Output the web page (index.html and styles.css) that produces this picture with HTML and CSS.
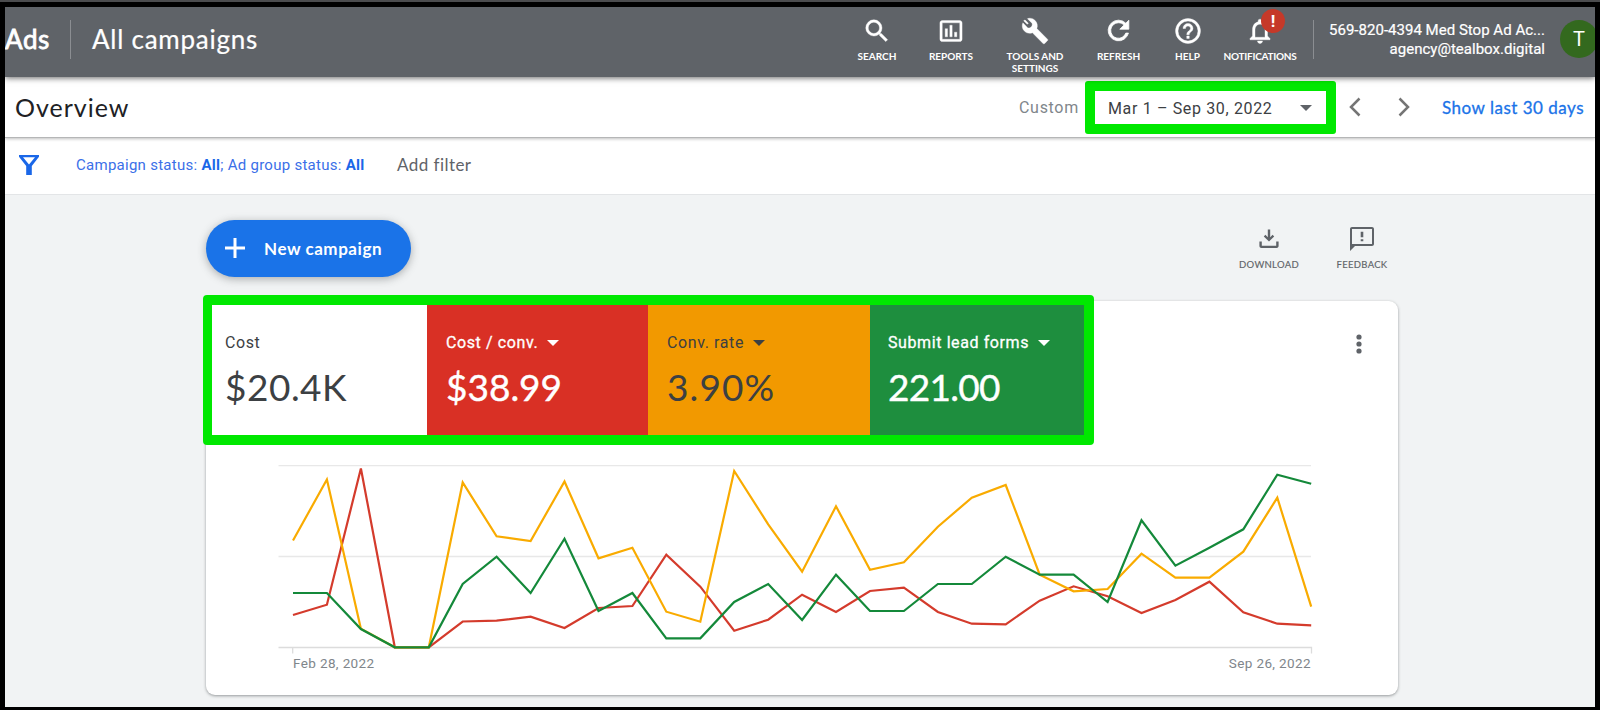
FILE: index.html
```html
<!DOCTYPE html>
<html lang="en">
<head>
<meta charset="utf-8">
<title>All campaigns – Overview</title>
<link rel="stylesheet" href="styles.css">
</head>
<body>
<div class="window">
  <header class="topbar">
    <span class="brand">Ads</span>
    <span class="rule"></span>
    <span class="scope">All campaigns</span>
    <nav class="tools">
      <a class="tool tool-search"><svg viewBox="0 0 24 24"><path d="M15.5 14h-.79l-.28-.27A6.47 6.47 0 0 0 16 9.500 6.500 6.500 0 1 0 9.500 16c1.610 0 3.090-.59 4.230-1.570l.27.28v.79l5 4.990L20.490 19l-4.990-5zm-6 0a4.500 4.500 0 1 1 0-9 4.500 4.500 0 0 1 0 9z"/></svg><span>SEARCH</span></a>
      <a class="tool tool-reports"><svg viewBox="0 0 24 24"><path d="M9 17H7v-7h2v7zm4 0h-2V7h2v10zm4 0h-2v-4h2v4zm2.500 2.100h-15V5h15v14.100zm0-16.100h-15c-1.100 0-2 .9-2 2v14c0 1.100.9 2 2 2h15c1.100 0 2-.9 2-2V5c0-1.100-.9-2-2-2z"/></svg><span>REPORTS</span></a>
      <a class="tool tool-settings"><svg viewBox="0 0 24 24"><path d="M22.700 19l-9.100-9.100c.9-2.300.4-5-1.500-6.900-2-2-4.400-2.300-6.600-1.600L9.400 5.300C10.400 7.600 8 10 5.700 9.200L1.600 5C.6 7.300.9 10.100 2.900 12.100c1.900 1.900 4.600 2.400 6.900 1.500l9.100 9.100c.4.4 1 .4 1.400 0l2.300-2.300c.5-.4.5-1.100.1-1.400z"/><path d="M2.200 3.200 5.400 6.300 6.300 5.400 3.400 2.400"/></svg><span>TOOLS AND<br>SETTINGS</span></a>
      <a class="tool tool-refresh"><svg viewBox="0 0 24 24"><path d="M17.650 6.350A7.960 7.960 0 0 0 12 4a8 8 0 1 0 7.730 10h-2.080A6 6 0 1 1 12 6c1.660 0 3.140.69 4.220 1.780L13 11h7V4l-2.350 2.350z"/></svg><span>REFRESH</span></a>
      <a class="tool tool-help"><svg viewBox="0 0 24 24"><path d="M11 18h2v-2h-2v2zm1-16a10 10 0 1 0 0 20 10 10 0 0 0 0-20zm0 18a8 8 0 1 1 0-16 8 8 0 0 1 0 16zm0-14a4 4 0 0 0-4 4h2a2 2 0 1 1 4 0c0 2-3 1.750-3 5h2c0-2.250 3-2.500 3-5a4 4 0 0 0-4-4z"/></svg><span>HELP</span></a>
      <a class="tool tool-bell"><svg viewBox="0 0 24 24"><path d="M12 22c1.100 0 2-.9 2-2h-4c0 1.100.9 2 2 2zm6-6v-5c0-3.070-1.640-5.640-4.500-6.320V4a1.500 1.500 0 0 0-3 0v.68C7.630 5.360 6 7.920 6 11v5l-2 2v1h16v-1l-2-2zm-2 1H8v-6c0-2.480 1.510-4.500 4-4.500s4 2.020 4 4.500v6z"/></svg><i class="badge">!</i><span>NOTIFICATIONS</span></a>
    </nav>
    <span class="rule rule-end"></span>
    <div class="account"><div class="account-id">569-820-4394 Med Stop Ad Ac...</div><div class="account-mail">agency@tealbox.digital</div></div>
    <span class="avatar">T</span>
  </header>

  <section class="titlebar">
    <h1>Overview</h1>
    <span class="custom">Custom</span>
    <div class="daterange"><span>Mar 1 – Sep 30, 2022</span><i class="caret"></i></div>
    <svg class="chev prev" viewBox="0 0 12 20"><path d="M10.500 1.500 2 10l8.500 8.500"/></svg>
    <svg class="chev next" viewBox="0 0 12 20"><path d="M1.500 1.500 10 10l-8.500 8.500"/></svg>
    <a class="last30">Show last 30 days</a>
  </section>

  <section class="filterbar">
    <svg class="funnel" viewBox="0 0 20 20"><path d="M0 0h20v1.800L12.800 11v9H7.200v-9L0 1.800zM4 2.200l6 7.300 6-7.300z" fill-rule="evenodd"/></svg>
    <span class="status">Campaign status: <b>All</b>; Ad group status: <b>All</b></span>
    <span class="addfilter">Add filter</span>
  </section>

  <main class="main">
    <div class="actions">
      <a class="newcampaign"><svg viewBox="0 0 20 20"><path d="M10 0v20M0 10h20"/></svg><span>New campaign</span></a>
      <a class="action action-download"><svg viewBox="0 0 24 24"><path d="M17.200 9.400 15.600 7.800 13.200 10.200V2.500h-2.400v7.700L8.400 7.800 6.800 9.400l5.200 5.200zM19.200 14.500v4.200H4.800v-4.200H2.400V19c0 1.100.9 2 2 2h15.200c1.100 0 2-.9 2-2v-4.500z"/></svg><span>DOWNLOAD</span></a>
      <a class="action action-feedback"><svg viewBox="0 0 24 24"><path d="M22 0H2C.9 0 0 .9 0 2v22l5-5h17c1.100 0 2-.9 2-2V2c0-1.100-.9-2-2-2zm0 17H2V2h20v15zM10.700 12.200h2.600v2h-2.600zm0-7.500h2.600v5.500h-2.600z"/></svg><span>FEEDBACK</span></a>
    </div>

    <article class="card">
      <div class="scores">
        <div class="score"><div class="label l-cost">Cost</div><div class="value v-cost">$20.4K</div></div>
        <div class="score red"><div class="label">Cost / conv.<i class="caret"></i></div><div class="value v-conv">$38.99</div></div>
        <div class="score orange"><div class="label">Conv. rate<i class="caret"></i></div><div class="value v-rate">3.90%</div></div>
        <div class="score green"><div class="label">Submit lead forms<i class="caret"></i></div><div class="value v-leads">221.00</div></div>
        <div class="highlight"></div>
      </div>
      <svg class="kebab" viewBox="0 0 6 20"><circle cx="3" cy="3" r="2.600"/><circle cx="3" cy="10" r="2.600"/><circle cx="3" cy="17" r="2.600"/></svg>
      <div class="chart">
        <svg class="plot" viewBox="278 460 1036 194">
          <path class="grid" d="M278.500 465.700H1311M278.500 556.500H1311"/>
          <path class="axis" d="M278.500 647.500H1311.500V653.500M292.700 647.500V653.500"/>
          <polyline class="line s-red" points=""/>
          <polyline class="line s-yellow" points=""/>
          <polyline class="line s-green" points=""/>
        </svg>
        <div class="dates"><span>Feb 28, 2022</span><span>Sep 26, 2022</span></div>
      </div>
    </article>
  </main>
</div>
<script src="chart.js"></script>
</body>
</html>
```
FILE: chart.js
```js
const series = {
  's-red': [615,604.7,468.5,647.3,647.3,621.5,620.7,616.7,628,608,606,554.7,586.7,630.7,619.7,594.7,612,591,587.7,612,623.7,624.3,600.7,586.3,596.3,613,600,581.7,612.3,623.7,625.3],
  's-yellow': [540.5,479.5,628.7,647.3,647.3,482.5,536.3,541,481.5,558.3,547.7,611.7,621.7,471,524.3,571.7,506.3,569.7,562.3,526.7,497.7,485,574.7,591.3,589,553.7,577.7,577.7,551.7,497.7,606.7],
  's-green': [593,593,629,647.3,647.3,584,556.7,593,538.7,611,593,638.3,638.3,602,584,620,574.7,611,611,584,584,556.7,574.7,574.7,602,520.3,565.7,547.7,529.3,474.7,483.7]
};
const firstX = 293, step = 33.94;
for (const [name, ys] of Object.entries(series)) {
  document.querySelector('.' + name).setAttribute('points',
    ys.map((y, i) => (firstX + i * step).toFixed(1) + ',' + y).join(' '));
}
```
FILE: styles.css
```css
* { box-sizing: border-box; }
body { margin: 0; background: #000; font-family: Roboto, "Liberation Sans", sans-serif; color: #3c4043; }
svg { display: block; flex: none; }
i { font-style: normal; }
.window { width: 1600px; height: 710px; border: 5px solid #000; border-bottom-width: 3px; border-top-width: 7px; background: #f1f3f4; overflow: hidden; display: flex; flex-direction: column; }
.window::before { content: ""; position: absolute; left: 0; top: 0; width: 1600px; height: 2px; background: #4b4c4e; }

.topbar { position: relative; z-index: 2; flex: none; height: 70px; background: #5f6368; color: #fff; display: flex; box-shadow: 0 1px 6px rgba(0,0,0,.6); }
.topbar > * { flex: none; }
.brand { width: 65px; font: 400 26px/64px Lato, sans-serif; letter-spacing: .6px; -webkit-text-stroke: .8px #fff; }
.rule { width: 1px; height: 39px; margin-top: 13px; background: #8b8e92; }
.scope { margin-left: 21px; width: 745px; font: 400 26px/64px Lato, sans-serif; letter-spacing: .75px; -webkit-text-stroke: .2px #fff; }
.tools { display: flex; margin-left: 3px; }
.tool { position: relative; flex: none; display: flex; flex-direction: column; align-items: center; padding-top: 9px; font: 700 10px/12px Lato, sans-serif; text-align: center; }
.tool svg { width: 30px; height: 30px; fill: #fff; stroke: #fff; stroke-width: .3; margin-bottom: 4px; }
.tool-search, .tool-reports { width: 74px; }
.tool-reports svg { width: 28px; height: 28px; margin: 1px 0 5px; }
.tool-settings { width: 94px; }
.tool-settings svg { width: 28px; height: 28px; margin: 1px 0 5px; }
.tool-refresh { width: 73px; }
.tool-refresh svg { width: 31px; height: 31px; margin: -1px 0 4px; stroke-width: .6; }
.tool-help { width: 65px; }
.tool-bell { width: 80px; letter-spacing: -.25px; }
.badge { position: absolute; left: 41px; top: 2px; width: 24px; height: 24px; border-radius: 12px; background: #c53929; font: 700 17px/24px Roboto, sans-serif; }
.rule-end { margin-left: 13px; }
.account { width: 231px; text-align: right; font-size: 15px; line-height: 19px; padding-top: 14px; white-space: nowrap; -webkit-text-stroke: .2px #fff; letter-spacing: .02px; }
.avatar { margin: 13px 0 0 15px; width: 38px; height: 38px; border-radius: 19px; background: #33691e; text-align: center; font-size: 20px; line-height: 39px; }

.titlebar { position: relative; z-index: 1; flex: none; height: 61px; background: #fff; border-bottom: 1px solid #b5b6b7; box-shadow: 0 1px 3px rgba(0,0,0,.25); display: flex; }
h1 { margin: 0; width: 1014px; padding-left: 10px; font: 400 25px/60px Lato, sans-serif; letter-spacing: 1px; color: #202124; }
.custom { width: 66px; font-size: 16px; line-height: 62px; letter-spacing: .7px; color: #80868b; }
.daterange { width: 251px; height: 53px; margin-top: 4px; border: 10px solid #00e800; border-radius: 3px; display: flex; align-items: center; justify-content: space-between; padding: 1px 14px 0 13px; font-size: 16px; letter-spacing: .65px; color: #3c4043; white-space: nowrap; }
.daterange .caret { color: #5f6368; }
.caret { display: inline-block; border: 6px solid transparent; border-top-color: currentColor; border-bottom: 0; }
.chev { width: 12px; height: 20px; margin-top: 20px; fill: none; stroke: #757575; stroke-width: 2.500; }
.prev { margin-left: 13px; }
.next { margin-left: 37px; }
.last30 { margin-left: 32px; font: 400 17px/61px Lato, sans-serif; letter-spacing: .5px; color: #1a73e8; white-space: nowrap; -webkit-text-stroke: .3px #1a73e8; }

.filterbar { flex: none; height: 57px; background: #fff; border-bottom: 1px solid #e3e5e7; display: flex; align-items: center; padding-bottom: 3px; }
.funnel { width: 20px; height: 20px; margin: 0 37px 0 14px; fill: #1a67e8; }
.status { width: 321px; font-size: 15px; letter-spacing: .27px; color: #3b6fe8; white-space: nowrap; }
.status b { color: #1a67e8; font-weight: 700; }
.addfilter { font: 400 17px Lato, sans-serif; letter-spacing: .45px; color: #5f6368; }

.main { flex: 1; width: 1192px; margin-left: 201px; }
.actions { display: flex; height: 106px; padding-top: 25px; }
.actions > * { flex: none; }
.newcampaign { width: 205px; height: 57px; border-radius: 29px; background: #1a73e8; color: #fff; box-shadow: 0 2px 8px rgba(60,64,67,.4); display: flex; align-items: center; padding: 0 0 1px 19px; font: 700 17px Lato, sans-serif; letter-spacing: .55px; margin-right: 818px; white-space: nowrap; }
.newcampaign svg { width: 20px; height: 20px; stroke: #fff; stroke-width: 3; margin-right: 19px; }
.action { display: flex; flex-direction: column; align-items: center; font: 400 9.500px/12px Lato, sans-serif; color: #5f6368; letter-spacing: .3px; -webkit-text-stroke: .15px #5f6368; }
.action svg { width: 24px; height: 24px; fill: #5f6368; margin: 7px 0 8px; }
.action-download { width: 80px; }
.action-feedback { width: 106px; }

.card { position: relative; height: 394px; background: #fff; border-radius: 9px; box-shadow: 0 1px 3px rgba(60,64,67,.5); }
.scores { position: relative; width: 885px; height: 139px; display: grid; grid-template-columns: 221px 221px 222px 221px; }
.score { padding: 32px 0 0 19px; }
.green.score { padding-left: 18px; }
.label { display: flex; align-items: center; font-size: 16px; line-height: 20px; letter-spacing: .6px; white-space: nowrap; }
.label .caret { margin-left: 9px; }
.value { font: 400 37px/48px Lato, sans-serif; margin-top: 10px; }
.v-cost { letter-spacing: .5px; }
.v-rate { letter-spacing: 1.100px; }
.v-leads { letter-spacing: -.7px; }
.red { background: #d93025; color: #fff; }
.orange { background: #f29900; }
.green { background: #1e8e3e; color: #fff; }
.red .label, .green .label { -webkit-text-stroke: .3px #fff; }
.red .value, .green .value { -webkit-text-stroke: .4px #fff; }
.highlight { position: absolute; left: -3px; top: -6px; width: 891px; height: 150px; border: 10px solid #00e800; border-left-width: 9px; border-radius: 4px; }
.kebab { position: absolute; right: 36px; top: 33px; width: 6px; height: 20px; fill: #5f6368; }
.chart { margin: 20px 0 0 72px; width: 1036px; }
.plot { width: 1036px; height: 194px; }
.grid { stroke: #e8e8e8; fill: none; stroke-width: 1.300; }
.axis { stroke: #dcdcdc; fill: none; stroke-width: 1.300; }
.line { fill: none; stroke-width: 2.200; }
.s-red { stroke: #d43b2c; }
.s-yellow { stroke: #f9ab00; }
.s-green { stroke: #14893a; }
.dates { display: flex; justify-content: space-between; padding: 0 3px 0 15px; font-size: 13.500px; line-height: 18px; letter-spacing: .38px; color: #80868b; }
```
